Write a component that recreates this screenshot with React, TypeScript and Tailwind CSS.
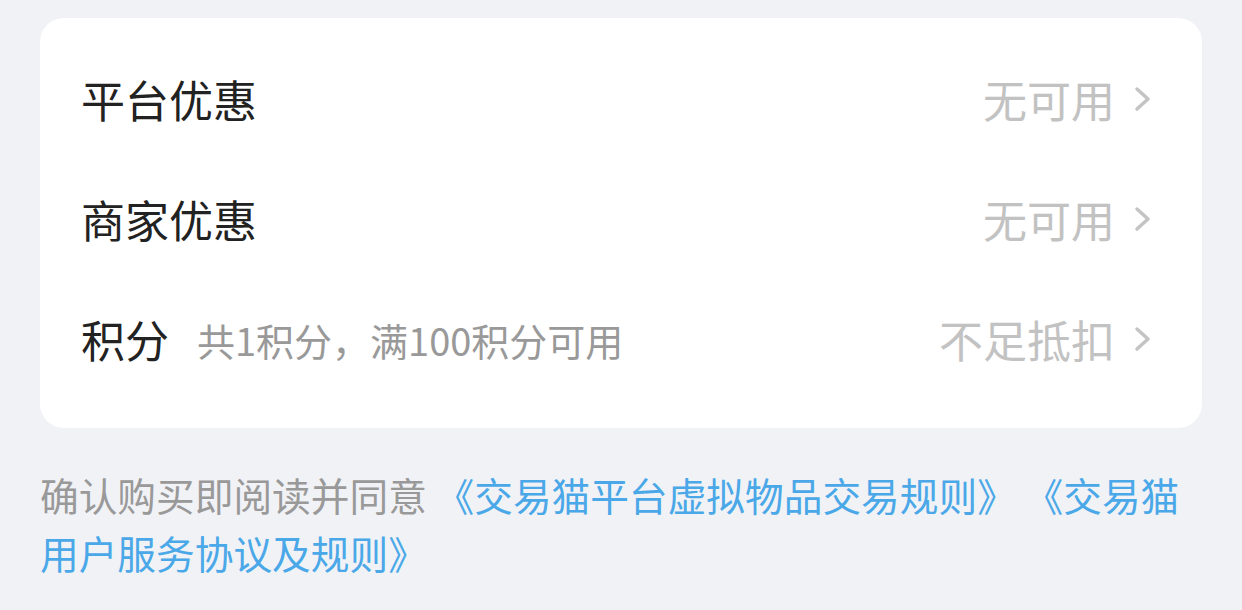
import React from 'react';

function Chevron() {
  return (
    <svg width="20" height="26" viewBox="0 0 20 26" fill="none" className="shrink-0">
      <path d="M4 3 L15 13 L4 23" stroke="#c4c4c4" strokeWidth="3.5" strokeLinecap="round" strokeLinejoin="round" />
    </svg>
  );
}

function Row({ label, sub, value }: { label: string; sub?: string; value: string }) {
  return (
    <div className="flex h-[120px] items-center justify-between">
      <div className="flex items-center">
        <span className="text-[44px] text-[#222]">{label}</span>
        {sub && <span className="ml-[28px] mt-[2px] text-[38px] text-[#999]">{sub}</span>}
      </div>
      <div className="flex items-center gap-[18px]">
        <span className="text-[44px] text-[#c2c2c2]">{value}</span>
        <Chevron />
      </div>
    </div>
  );
}

export default function App() {
  return (
    <div
      className="h-[610px] w-[1242px] bg-[#f1f2f6] px-[40px] pt-[18px] leading-none"
      style={{ fontFamily: '"Noto Sans CJK SC", "Noto Sans", sans-serif' }}
    >
      <div className="rounded-[24px] bg-white pl-[41px] pr-[49px] pt-[21px] pb-[29px]">
        <Row label="平台优惠" value="无可用" />
        <Row label="商家优惠" value="无可用" />
        <Row label="积分" sub="共1积分，满100积分可用" value="不足抵扣" />
      </div>
      <p className="mt-[37px] text-[38.7px] leading-[58px] text-[#999]">
        确认购买即阅读并同意{' '}
        <span className="text-[#4aa8e8]">《交易猫平台虚拟物品交易规则》 《交易猫用户服务协议及规则》</span>
      </p>
    </div>
  );
}
